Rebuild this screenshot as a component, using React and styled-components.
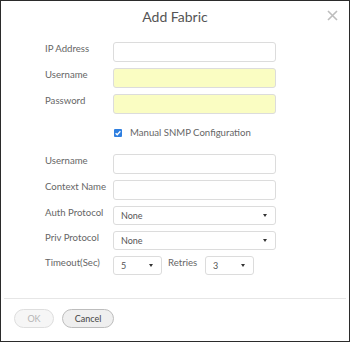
import React from 'react'
import styled, { createGlobalStyle } from 'styled-components'

const GlobalStyle = createGlobalStyle`
	body {
		margin: 0;
		background: #fff;
		font-family: Lato, "Liberation Sans", sans-serif;
	}
`

function Select({ value, width }) {
	return (
		<SelectBox $width={width}>
			<span>{value}</span>
			<Caret />
		</SelectBox>
	)
}

function App() {
	return (
		<>
			<GlobalStyle />
			<Dialog>
				<Header>
					<Title>Add Fabric</Title>
					<Close>
						<svg width="11" height="11" viewBox="0 0 11 11">
							<path d="M1 1 L10 10 M10 1 L1 10" stroke="#bdbdbd" strokeWidth="1.6" />
						</svg>
					</Close>
				</Header>
				<Body>
					<Row>
						<Label>IP Address</Label>
						<Input />
					</Row>
					<Row>
						<Label>Username</Label>
						<Input $autofill />
					</Row>
					<Row>
						<Label>Password</Label>
						<Input $autofill />
					</Row>
					<CheckRow>
						<Check>
							<svg width="8" height="8" viewBox="0 0 8 8">
								<path d="M1.6 4.2 L3.2 5.8 L6.4 2.2" fill="none" stroke="#fff" strokeWidth="1.3" />
							</svg>
						</Check>
						<CheckLabel>Manual SNMP Configuration</CheckLabel>
					</CheckRow>
					<Row>
						<Label>Username</Label>
						<Input />
					</Row>
					<Row>
						<Label>Context Name</Label>
						<Input />
					</Row>
					<Row>
						<Label>Auth Protocol</Label>
						<Select value="None" />
					</Row>
					<Row>
						<Label>Priv Protocol</Label>
						<Select value="None" />
					</Row>
					<Row>
						<Label>Timeout(Sec)</Label>
						<Inline>
							<Select value="5" width={49} />
							<InlineLabel>Retries</InlineLabel>
							<Select value="3" width={49} />
						</Inline>
					</Row>
				</Body>
				<Footer>
					<Button disabled>OK</Button>
					<Button $width={52}>Cancel</Button>
				</Footer>
			</Dialog>
		</>
	)
}

const Dialog = styled.div`
	width: 350px;
	height: 342px;
	box-sizing: border-box;
	border: 1px solid #2b2b2b;
	display: flex;
	flex-direction: column;
	background: #fff;
`
const Header = styled.div`
	position: relative;
	height: 32px;
	display: flex;
	align-items: center;
	justify-content: center;
`
const Title = styled.div`
	font-size: 14px;
	color: #555;
	margin-top: -2px;
`
const Close = styled.div`
	position: absolute;
	right: 11px;
	top: 9px;
	display: flex;
`
const Body = styled.div`
	flex: 1;
	padding: 9px 0 0 44px;
	display: flex;
	flex-direction: column;
	gap: 6px;
`
const Row = styled.div`
	display: grid;
	grid-template-columns: 68px auto;
	align-items: start;
`
const Label = styled.div`
	font-size: 9.6px;
	color: #666;
	padding-top: 1px;
	white-space: nowrap;
`
const Input = styled.div`
	width: 163px;
	height: 20px;
	box-sizing: border-box;
	border: 1px solid #dcdcdc;
	border-radius: 3px;
	background: ${(p) => (p.$autofill ? '#fafdc2' : '#fff')};
`
const CheckRow = styled.div`
	display: flex;
	align-items: center;
	gap: 8px;
	padding-left: 69px;
	margin: 7px 0 10px;
`
const Check = styled.div`
	width: 8px;
	height: 8px;
	border-radius: 1px;
	background: #2f7fe0;
	display: flex;
`
const CheckLabel = styled.div`
	font-size: 9.6px;
	color: #666;
`
const SelectBox = styled.div`
	width: ${(p) => p.$width || 163}px;
	height: 19px;
	box-sizing: border-box;
	border: 1px solid #dcdcdc;
	border-radius: 3px;
	background: #fff;
	display: flex;
	align-items: center;
	justify-content: space-between;
	padding: 0 8px 0 7px;
	font-size: 9px;
	color: #555;
`
const Caret = styled.span`
	width: 0;
	height: 0;
	border-left: 2.5px solid transparent;
	border-right: 2.5px solid transparent;
	border-top: 3px solid #333;
`
const Inline = styled.div`
	display: flex;
	align-items: flex-start;
	gap: 6px;
`
const InlineLabel = styled.div`
	font-size: 9.6px;
	color: #666;
	padding-top: 1px;
	width: 31px;
`
const Footer = styled.div`
	height: 43px;
	box-sizing: border-box;
	border-top: 1px solid #e6e6e6;
	margin: 0 3px;
	display: flex;
	align-items: flex-start;
	gap: 8px;
	padding: 10px 0 0 10px;
`
const Button = styled.button`
	width: ${(p) => p.$width || 40}px;
	height: 19px;
	border-radius: 10px;
	border: 1px solid ${(p) => (p.disabled ? '#dedede' : '#bdbdbd')};
	background: ${(p) => (p.disabled ? '#f6f6f6' : '#efefef')};
	color: ${(p) => (p.disabled ? '#b5b5b5' : '#444')};
	font-family: Lato, "Liberation Sans", sans-serif;
	font-size: 9px;
	padding: 0;
`

export default App
